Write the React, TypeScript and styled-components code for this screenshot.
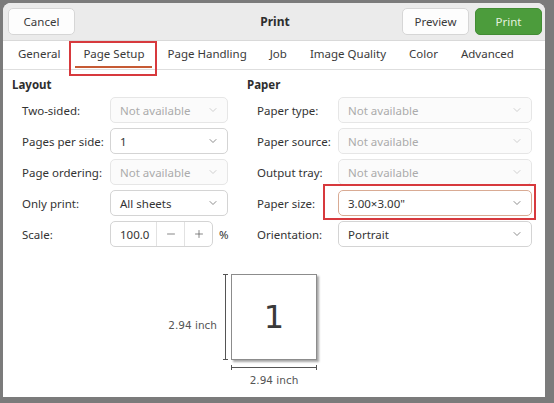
import styled, { createGlobalStyle } from 'styled-components';
import { ChevronDown, Minus, Plus } from 'lucide-react';

const GlobalStyle = createGlobalStyle`
  body {
    margin: 0;
    background: #7b7b7b;
    font-family: "Noto Sans", "DejaVu Sans", sans-serif;
    font-size: 11.5px;
    color: #333;
  }
`;

const Screen = styled.div`
  width: 554px;
  height: 403px;
  box-sizing: border-box;
  padding: 3px 9px 6px 3px;
  background: #7b7b7b;
`;

const Window = styled.div`
  height: 100%;
  background: #fff;
  border-radius: 8px 8px 0 0;
  overflow: hidden;
  display: flex;
  flex-direction: column;
`;

const HeaderBar = styled.div`
  height: 37px;
  flex: none;
  display: grid;
  grid-template-columns: 1fr auto 1fr;
  align-items: center;
  padding: 0 3px 0 5px;
  background: #ebebeb;
  border-bottom: 1px solid #d9d9d9;
`;

const Title = styled.div`
  font-weight: 700;
  font-size: 12px;
  color: #2e2e2e;
`;

const HeaderGroup = styled.div<{ $end?: boolean }>`
  display: flex;
  gap: 6px;
  justify-content: ${(p) => (p.$end ? 'flex-end' : 'flex-start')};
`;

const Button = styled.button<{ $primary?: boolean }>`
  height: 27px;
  width: 67px;
  border-radius: 5px;
  font-family: inherit;
  font-size: 11.5px;
  border: 1px solid ${(p) => (p.$primary ? '#438c35' : '#d6d6d6')};
  background: ${(p) => (p.$primary ? '#4c9c3c' : '#fdfdfd')};
  color: ${(p) => (p.$primary ? '#e4f2df' : '#3a3a3a')};
  padding: 0;
`;

const Tabs = styled.div`
  height: 28px;
  flex: none;
  display: flex;
  gap: 7px;
  padding-left: 7px;
  border-bottom: 1px solid #dedede;
`;

const Tab = styled.div<{ $active?: boolean }>`
  position: relative;
  display: flex;
  align-items: center;
  padding: 0 8px 3px;
  color: #3a3a3a;

  &::after {
    content: '';
    position: absolute;
    left: 0;
    right: 0;
    bottom: 1px;
    height: 2px;
    background: ${(p) => (p.$active ? '#c65a34' : 'transparent')};
  }
`;

const Highlight = styled.div<{ $t: number; $r: number; $b: number; $l: number }>`
  position: absolute;
  top: ${(p) => p.$t}px;
  right: ${(p) => p.$r}px;
  bottom: ${(p) => p.$b}px;
  left: ${(p) => p.$l}px;
  border: 2px solid #d7393d;
  pointer-events: none;
`;

const Content = styled.div`
  flex: 1;
  display: flex;
  flex-direction: column;
  padding-top: 7px;
`;

const Columns = styled.div`
  display: grid;
  grid-template-columns: 237px 1fr;
`;

const Section = styled.div<{ $pad: number }>`
  padding-left: ${(p) => p.$pad}px;
  padding-right: 13px;
`;

const SectionTitle = styled.div`
  font-weight: 700;
  height: 16px;
  line-height: 16px;
  margin-bottom: 4px;
  color: #2e2e2e;
`;

const FormGrid = styled.div<{ $label: number }>`
  display: grid;
  grid-template-columns: ${(p) => p.$label}px 1fr;
  grid-auto-rows: 26px;
  row-gap: 5px;
  padding-left: 10px;
  align-items: center;
`;

const Label = styled.div`
  color: #333;
`;

const ComboWrap = styled.div<{ $width?: number }>`
  position: relative;
  height: 26px;
  width: ${(p) => (p.$width ? `${p.$width}px` : 'auto')};
`;

const Combo = styled.div<{ $disabled?: boolean; $focused?: boolean }>`
  height: 100%;
  box-sizing: border-box;
  display: flex;
  align-items: center;
  justify-content: space-between;
  padding: 0 8px 0 9px;
  border-radius: 5px;
  border: 1px solid
    ${(p) => (p.$focused ? '#d9ab94' : p.$disabled ? '#e6e6e6' : '#d4d4d4')};
  background: ${(p) => (p.$disabled ? '#fbfbfb' : '#fff')};
  color: ${(p) => (p.$disabled ? '#ababab' : '#333')};

  svg {
    color: ${(p) => (p.$disabled ? '#c4c4c4' : '#6e6e6e')};
  }
`;

const SpinRow = styled.div`
  display: flex;
  align-items: center;
  gap: 6px;
`;

const Spin = styled.div`
  display: flex;
  height: 26px;
  width: 103px;
  box-sizing: border-box;
  border: 1px solid #d4d4d4;
  border-radius: 5px;
`;

const SpinValue = styled.div`
  flex: 1;
  display: flex;
  align-items: center;
  padding-left: 9px;
`;

const SpinButton = styled.div`
  width: 27px;
  display: flex;
  align-items: center;
  justify-content: center;
  border-left: 1px solid #e2e2e2;
  color: #555;
`;

const Preview = styled.div`
  margin-top: 27px;
  display: grid;
  grid-template-columns: 1fr 86px 1fr;
  grid-template-rows: 86px auto;
  font-family: "DejaVu Sans", sans-serif;
  font-size: 10.5px;
  color: #555;
`;

const SideDim = styled.div`
  display: flex;
  justify-content: flex-end;
  align-items: center;
  gap: 5px;
  padding-right: 2px;

  span {
    margin-top: 15px;
  }
`;

const Page = styled.div`
  box-sizing: border-box;
  border: 1px solid #8c8c8c;
  box-shadow: 2px 2px 2px rgba(0, 0, 0, 0.35);
  display: flex;
  align-items: center;
  justify-content: center;
  font-family: "DejaVu Sans", sans-serif;
  font-size: 32px;
  color: #3a3a3a;
  background: #fff;
`;

const BottomDim = styled.div`
  grid-column: 2;
  display: flex;
  flex-direction: column;
  align-items: center;
  gap: 3px;
  padding-top: 4px;
`;

const VDim = () => (
  <svg width="7" height="86" viewBox="0 0 7 86">
    <path d="M3.5 0.5V85.5M1 0.5H6M1 85.5H6" stroke="#555" strokeWidth="1" fill="none" />
  </svg>
);

const HDim = () => (
  <svg width="86" height="7" viewBox="0 0 86 7">
    <path d="M0.5 3.5H85.5M0.5 1V6M85.5 1V6" stroke="#555" strokeWidth="1" fill="none" />
  </svg>
);

type Field = {
  label: string;
  value: string;
  disabled?: boolean;
  focused?: boolean;
  marked?: boolean;
};

const layoutFields: Field[] = [
  { label: 'Two-sided:', value: 'Not available', disabled: true },
  { label: 'Pages per side:', value: '1' },
  { label: 'Page ordering:', value: 'Not available', disabled: true },
  { label: 'Only print:', value: 'All sheets' },
];

const paperFields: Field[] = [
  { label: 'Paper type:', value: 'Not available', disabled: true },
  { label: 'Paper source:', value: 'Not available', disabled: true },
  { label: 'Output tray:', value: 'Not available', disabled: true },
  { label: 'Paper size:', value: '3.00×3.00"', focused: true, marked: true },
  { label: 'Orientation:', value: 'Portrait' },
];

const tabs = ['General', 'Page Setup', 'Page Handling', 'Job', 'Image Quality', 'Color', 'Advanced'];

const ComboField = ({ field, width }: { field: Field; width: number }) => (
  <>
    <Label>{field.label}</Label>
    <ComboWrap $width={width}>
      <Combo $disabled={field.disabled} $focused={field.focused}>
        <span>{field.value}</span>
        <ChevronDown size={12} strokeWidth={1.6} />
      </Combo>
      {field.marked && <Highlight $t={-6} $r={-4} $b={-4} $l={-15} />}
    </ComboWrap>
  </>
);

export default function App() {
  return (
    <>
      <GlobalStyle />
      <Screen>
        <Window>
          <HeaderBar>
            <HeaderGroup>
              <Button>Cancel</Button>
            </HeaderGroup>
            <Title>Print</Title>
            <HeaderGroup $end>
              <Button>Preview</Button>
              <Button $primary>Print</Button>
            </HeaderGroup>
          </HeaderBar>

          <Tabs>
            {tabs.map((t) => (
              <Tab key={t} $active={t === 'Page Setup'}>
                {t}
                {t === 'Page Setup' && <Highlight $t={0} $r={-5} $b={-7} $l={-6} />}
              </Tab>
            ))}
          </Tabs>

          <Content>
            <Columns>
              <Section $pad={9}>
                <SectionTitle>Layout</SectionTitle>
                <FormGrid $label={88}>
                  {layoutFields.map((f) => (
                    <ComboField key={f.label} field={f} width={118} />
                  ))}
                  <Label>Scale:</Label>
                  <SpinRow>
                    <Spin>
                      <SpinValue>100.0</SpinValue>
                      <SpinButton>
                        <Minus size={12} strokeWidth={1.4} />
                      </SpinButton>
                      <SpinButton>
                        <Plus size={12} strokeWidth={1.4} />
                      </SpinButton>
                    </Spin>
                    <span>%</span>
                  </SpinRow>
                </FormGrid>
              </Section>
              <Section $pad={7}>
                <SectionTitle>Paper</SectionTitle>
                <FormGrid $label={81}>
                  {paperFields.map((f) => (
                    <ComboField key={f.label} field={f} width={194} />
                  ))}
                </FormGrid>
              </Section>
            </Columns>

            <Preview>
              <SideDim>
                <span>2.94 inch</span>
                <VDim />
              </SideDim>
              <Page>1</Page>
              <div />
              <BottomDim>
                <HDim />
                <span>2.94 inch</span>
              </BottomDim>
            </Preview>
          </Content>
        </Window>
      </Screen>
    </>
  );
}
